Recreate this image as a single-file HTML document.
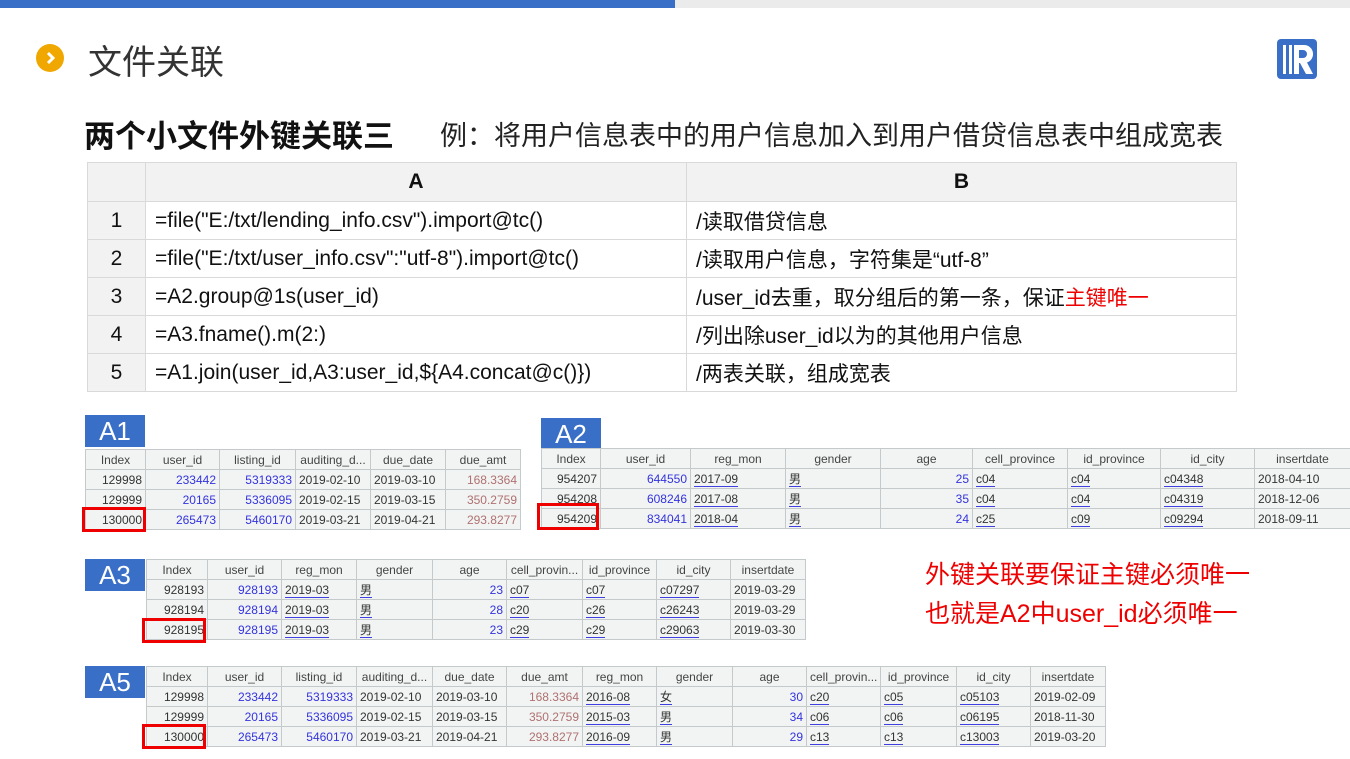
<!DOCTYPE html>
<html><head><meta charset="utf-8"><style>
body{margin:0;width:1350px;height:759px;position:relative;overflow:hidden;background:#fff;font-family:"Liberation Sans","Noto Sans CJK SC",sans-serif;}
.a{position:absolute}
.main{position:absolute;left:87px;top:162px;border-collapse:collapse;font-size:21px;color:#111}
.main td{border:1px solid #d9d9d9;height:38px;padding:0 0 0 9px;box-sizing:border-box}
.main tr:first-child td{background:#f2f2f2;font-weight:bold;text-align:center;padding:0;height:39px}
.main td:first-child{background:#f2f2f2;text-align:center;padding:0}
.t{position:absolute;border-collapse:collapse;table-layout:fixed;font-size:12px;color:#333;background:#f2f4f4}
.t td{border:1px solid #c4cacc;height:20px;padding:0 3px;box-sizing:border-box;white-space:nowrap;overflow:hidden;text-align:right}
.t tr:first-child td{text-align:center;color:#444}
.t .n{color:#3333dd}
.t .m{color:#b07070}
.t .d{text-align:left}
.t .u{text-align:left}
.t .u span{border-bottom:1px solid #4040e0}
.lab{position:absolute;background:#3a6fc8;color:#fff;font-size:26px;width:60px;height:32px;line-height:32px;text-align:center}
.red{position:absolute;border:3px solid #e00;box-sizing:border-box}
</style></head><body>
<div class="a" style="left:0;top:0;width:675px;height:8px;background:#3a6fc8"></div>
<div class="a" style="left:675px;top:0;width:675px;height:8px;background:#ebebeb"></div>
<div class="a" style="left:36px;top:44px;width:28px;height:28px;border-radius:50%;background:#f0a800"></div>
<svg class="a" style="left:36px;top:44px" width="28" height="28"><path d="M12 9l5 5-5 5" stroke="#fff" stroke-width="3" fill="none"/></svg>
<div class="a" style="left:88px;top:35px;font-size:34px;color:#333">文件关联</div>
<svg class="a" style="left:1277px;top:39px" width="40" height="40"><rect width="40" height="40" rx="4" fill="#3a6fc8"/><rect x="6" y="6" width="3" height="29" fill="#fff"/><rect x="12" y="6" width="3" height="29" fill="#fff"/><path d="M17 6h10a9 9 0 0 1 3 17.5l6 11.5h-7l-6-11h-1v11h-5z M22 11v8h4a4 4 0 0 0 0-8z" fill="#fff" fill-rule="evenodd"/></svg>
<div class="a" style="left:84px;top:111px;font-size:31px;font-weight:bold;color:#111">两个小文件外键关联三</div>
<div class="a" style="left:440px;top:114px;font-size:27px;color:#222;white-space:nowrap">例：将用户信息表中的用户信息加入到用户借贷信息表中组成宽表</div>
<table class="main">
<tr><td style="width:58px"></td><td style="width:541px">A</td><td style="width:550px">B</td></tr>
<tr><td>1</td><td>=file("E:/txt/lending_info.csv").import@tc()</td><td>/读取借贷信息</td></tr>
<tr><td>2</td><td>=file("E:/txt/user_info.csv":"utf-8").import@tc()</td><td>/读取用户信息，字符集是“utf-8”</td></tr>
<tr><td>3</td><td>=A2.group@1s(user_id)</td><td>/user_id去重，取分组后的第一条，保证<span style="color:#e00">主键唯一</span></td></tr>
<tr><td>4</td><td>=A3.fname().m(2:)</td><td>/列出除user_id以为的其他用户信息</td></tr>
<tr><td>5</td><td>=A1.join(user_id,A3:user_id,${A4.concat@c()})</td><td>/两表关联，组成宽表</td></tr>
</table>

<div class="lab" style="left:85px;top:415px">A1</div>
<table class="t" style="left:85px;top:449px;width:435px">
<colgroup><col style="width:60px"><col style="width:74px"><col style="width:76px"><col style="width:75px"><col style="width:75px"><col style="width:75px"></colgroup>
<tr><td>Index</td><td>user_id</td><td>listing_id</td><td>auditing_d...</td><td>due_date</td><td>due_amt</td></tr>
<tr><td>129998</td><td class="n">233442</td><td class="n">5319333</td><td class="d">2019-02-10</td><td class="d">2019-03-10</td><td class="m">168.3364</td></tr>
<tr><td>129999</td><td class="n">20165</td><td class="n">5336095</td><td class="d">2019-02-15</td><td class="d">2019-03-15</td><td class="m">350.2759</td></tr>
<tr><td>130000</td><td class="n">265473</td><td class="n">5460170</td><td class="d">2019-03-21</td><td class="d">2019-04-21</td><td class="m">293.8277</td></tr>
</table>
<div class="red" style="left:82px;top:507px;width:64px;height:25px"></div>

<div class="lab" style="left:541px;top:418px">A2</div>
<table class="t" style="left:541px;top:448px;width:809px">
<colgroup><col style="width:59px"><col style="width:90px"><col style="width:95px"><col style="width:95px"><col style="width:92px"><col style="width:95px"><col style="width:93px"><col style="width:94px"><col style="width:96px"></colgroup>
<tr><td>Index</td><td>user_id</td><td>reg_mon</td><td>gender</td><td>age</td><td>cell_province</td><td>id_province</td><td>id_city</td><td>insertdate</td></tr>
<tr><td>954207</td><td class="n">644550</td><td class="u"><span>2017-09</span></td><td class="u"><span>男</span></td><td class="n">25</td><td class="u"><span>c04</span></td><td class="u"><span>c04</span></td><td class="u"><span>c04348</span></td><td class="d">2018-04-10</td></tr>
<tr><td>954208</td><td class="n">608246</td><td class="u"><span>2017-08</span></td><td class="u"><span>男</span></td><td class="n">35</td><td class="u"><span>c04</span></td><td class="u"><span>c04</span></td><td class="u"><span>c04319</span></td><td class="d">2018-12-06</td></tr>
<tr><td>954209</td><td class="n">834041</td><td class="u"><span>2018-04</span></td><td class="u"><span>男</span></td><td class="n">24</td><td class="u"><span>c25</span></td><td class="u"><span>c09</span></td><td class="u"><span>c09294</span></td><td class="d">2018-09-11</td></tr>
</table>
<div class="red" style="left:537px;top:503px;width:62px;height:27px"></div>

<div class="lab" style="left:85px;top:559px">A3</div>
<table class="t" style="left:146px;top:559px;width:659px">
<colgroup><col style="width:61px"><col style="width:74px"><col style="width:75px"><col style="width:76px"><col style="width:74px"><col style="width:76px"><col style="width:74px"><col style="width:74px"><col style="width:75px"></colgroup>
<tr><td>Index</td><td>user_id</td><td>reg_mon</td><td>gender</td><td>age</td><td>cell_provin...</td><td>id_province</td><td>id_city</td><td>insertdate</td></tr>
<tr><td>928193</td><td class="n">928193</td><td class="u"><span>2019-03</span></td><td class="u"><span>男</span></td><td class="n">23</td><td class="u"><span>c07</span></td><td class="u"><span>c07</span></td><td class="u"><span>c07297</span></td><td class="d">2019-03-29</td></tr>
<tr><td>928194</td><td class="n">928194</td><td class="u"><span>2019-03</span></td><td class="u"><span>男</span></td><td class="n">28</td><td class="u"><span>c20</span></td><td class="u"><span>c26</span></td><td class="u"><span>c26243</span></td><td class="d">2019-03-29</td></tr>
<tr><td>928195</td><td class="n">928195</td><td class="u"><span>2019-03</span></td><td class="u"><span>男</span></td><td class="n">23</td><td class="u"><span>c29</span></td><td class="u"><span>c29</span></td><td class="u"><span>c29063</span></td><td class="d">2019-03-30</td></tr>
</table>
<div class="red" style="left:142px;top:618px;width:64px;height:25px"></div>

<div class="a" style="left:925px;top:556px;font-size:25px;color:#e00;line-height:39px;white-space:nowrap">外键关联要保证主键必须唯一<br>也就是A2中user_id必须唯一</div>

<div class="lab" style="left:85px;top:666px">A5</div>
<table class="t" style="left:146px;top:666px;width:959px">
<colgroup><col style="width:61px"><col style="width:74px"><col style="width:75px"><col style="width:76px"><col style="width:74px"><col style="width:76px"><col style="width:74px"><col style="width:76px"><col style="width:74px"><col style="width:74px"><col style="width:76px"><col style="width:74px"><col style="width:75px"></colgroup>
<tr><td>Index</td><td>user_id</td><td>listing_id</td><td>auditing_d...</td><td>due_date</td><td>due_amt</td><td>reg_mon</td><td>gender</td><td>age</td><td>cell_provin...</td><td>id_province</td><td>id_city</td><td>insertdate</td></tr>
<tr><td>129998</td><td class="n">233442</td><td class="n">5319333</td><td class="d">2019-02-10</td><td class="d">2019-03-10</td><td class="m">168.3364</td><td class="u"><span>2016-08</span></td><td class="u"><span>女</span></td><td class="n">30</td><td class="u"><span>c20</span></td><td class="u"><span>c05</span></td><td class="u"><span>c05103</span></td><td class="d">2019-02-09</td></tr>
<tr><td>129999</td><td class="n">20165</td><td class="n">5336095</td><td class="d">2019-02-15</td><td class="d">2019-03-15</td><td class="m">350.2759</td><td class="u"><span>2015-03</span></td><td class="u"><span>男</span></td><td class="n">34</td><td class="u"><span>c06</span></td><td class="u"><span>c06</span></td><td class="u"><span>c06195</span></td><td class="d">2018-11-30</td></tr>
<tr><td>130000</td><td class="n">265473</td><td class="n">5460170</td><td class="d">2019-03-21</td><td class="d">2019-04-21</td><td class="m">293.8277</td><td class="u"><span>2016-09</span></td><td class="u"><span>男</span></td><td class="n">29</td><td class="u"><span>c13</span></td><td class="u"><span>c13</span></td><td class="u"><span>c13003</span></td><td class="d">2019-03-20</td></tr>
</table>
<div class="red" style="left:142px;top:724px;width:64px;height:25px"></div>
</body></html>
